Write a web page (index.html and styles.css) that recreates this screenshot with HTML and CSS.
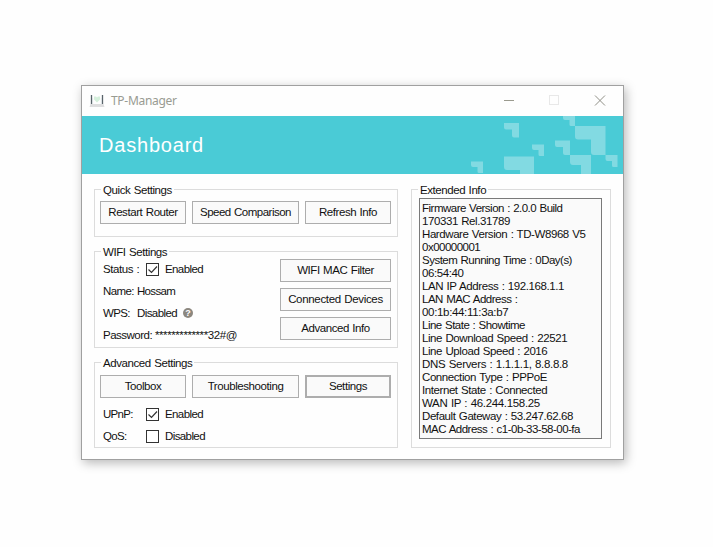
FILE: index.html
```
<!DOCTYPE html>
<html lang="en">
<head>
<meta charset="utf-8">
<title>TP-Manager</title>
<link rel="stylesheet" href="styles.css">
</head>
<body>
<div class="window">
  <header class="titlebar">
    <svg class="app-icon" width="16" height="14" viewBox="0 0 16 14">
      <path d="M5 2.500h2l1 1 1-1h2v3L8 8.500 5 5.500z" fill="#d5f0dc"/>
      <path d="M2.500 1v9M13.500 1v9" stroke="#59636a" stroke-width="1.300"/>
      <path d="M3.600 4v6M12.400 4v6" stroke="#d9dfe2"/>
      <path d="M1.500 10h13l1 3H.5z" fill="#dededf"/>
    </svg>
    <span class="app-name">TP-Manager</span>
    <svg class="controls" width="104" height="12" viewBox="0 0 104 12" fill="none">
      <path d="M0 5.500h10" stroke="#9a9a8e"/>
      <rect x="45.500" y=".5" width="9" height="9" stroke="#e8e8e8"/>
      <path d="M91 .5l10 10M101 .5l-10 10" stroke="#8f8f86"/>
    </svg>
  </header>
  <div class="banner">
    <h1>Dashboard</h1>
    <svg class="pattern" width="160" height="58" viewBox="0 0 160 58" fill="#82dae2">
      <path d="M42 7h15v14.500h-5q-2 0-2-2V13.500h-6q-2 0-2-2z"/>
      <path d="M70 28.500h12v11.500h-4q-1.500 0-1.500-1.500V34H72q-2 0-2-2z"/>
      <path d="M9 45.500h12V57h-4q-1.500 0-1.500-1.500V51H11q-2 0-2-2z"/>
      <path d="M42 40.500h30V58H58v-4H45q-3 0-3-3z"/>
      <path d="M101 0h12v10h-4q-1.500 0-1.500-1.500V4H103q-2 0-2-2z"/>
      <path d="M113 10h30.500v29H132q-3 0-3-3V23.500h-13q-3 0-3-3z"/>
      <path d="M93 24.500h15V39h-5q-2 0-2-2v-6h-6q-2 0-2-2z"/>
      <path d="M108 39h21v19h-10v-9h-8q-3 0-3-3z"/>
      <path d="M143.500 39H155.500v12h-4q-1.500 0-1.500-1.500V45h-4.500q-2 0-2-2z"/>
    </svg>
  </div>
  <main class="content">
    <div class="settings">
      <section class="group quick">
        <h2>Quick Settings</h2>
        <div class="button-row">
          <button>Restart Router</button>
          <button class="snug">Speed Comparison</button>
          <button>Refresh Info</button>
        </div>
      </section>
      <section class="group wifi">
        <h2>WIFI Settings</h2>
        <div class="wifi-body">
          <div class="rows">
            <div class="row"><span class="status-label">Status :</span><svg class="check" width="13" height="13" viewBox="0 0 13 13"><rect x=".5" y=".5" width="12" height="12"/><path d="M2.500 6.500l3 3 5.500-6"/></svg><span class="state">Enabled</span></div>
            <div class="row"><span class="name-label">Name:</span><span class="tight">Hossam</span></div>
            <div class="row"><span class="wps-label">WPS:</span><span class="wps-state">Disabled</span><span class="help">?</span></div>
            <div class="row"><span class="pass-label">Password:</span><span>*************32#@</span></div>
          </div>
          <div class="button-stack">
            <button>WIFI MAC Filter</button>
            <button class="loose">Connected Devices</button>
            <button>Advanced Info</button>
          </div>
        </div>
      </section>
      <section class="group advanced">
        <h2>Advanced Settings</h2>
        <div class="button-row">
          <button>Toolbox</button>
          <button>Troubleshooting</button>
          <button class="focused">Settings</button>
        </div>
        <div class="rows">
          <div class="row"><span class="status-label tight">UPnP:</span><svg class="check" width="13" height="13" viewBox="0 0 13 13"><rect x=".5" y=".5" width="12" height="12"/><path d="M2.500 6.500l3 3 5.500-6"/></svg><span class="state">Enabled</span></div>
          <div class="row"><span class="status-label tight">QoS:</span><svg class="check" width="13" height="13" viewBox="0 0 13 13"><rect x=".5" y=".5" width="12" height="12"/></svg><span class="state">Disabled</span></div>
        </div>
      </section>
    </div>
    <section class="group extended">
      <h2>Extended Info</h2>
      <div class="info">
        <div class="snug">Firmware Version : 2.0.0 Build</div>
        <div>170331 Rel.31789</div>
        <div>Hardware Version : TD-W8968 V5</div>
        <div class="snug">0x00000001</div>
        <div class="snug">System Running Time : 0Day(s)</div>
        <div>06:54:40</div>
        <div>LAN IP Address : 192.168.1.1</div>
        <div class="snug">LAN MAC Address :</div>
        <div class="loose">00:1b:44:11:3a:b7</div>
        <div class="snug">Line State : Showtime</div>
        <div>Line Download Speed : 22521</div>
        <div>Line Upload Speed : 2016</div>
        <div class="loose">DNS Servers : 1.1.1.1, 8.8.8.8</div>
        <div>Connection Type : PPPoE</div>
        <div>Internet State : Connected</div>
        <div class="loose">WAN IP : 46.244.158.25</div>
        <div>Default Gateway : 53.247.62.68</div>
        <div class="snug">MAC Address : c1-0b-33-58-00-fa</div>
      </div>
    </section>
  </main>
</div>
</body>
</html>
```
FILE: styles.css
```
* { box-sizing: border-box; }
body {
  margin: 0;
  padding: 85px 0 0 81px;
  height: 547px;
  background: #fefefe;
  color: #111;
  font: 11.5px/13px "Liberation Sans", Arial, sans-serif;
  letter-spacing: -0.42px;
  word-spacing: .6px;
  white-space: nowrap;
}
h1, h2 { margin: 0; font-weight: normal; }
.window {
  width: 543px;
  height: 375px;
  border: 1px solid #a0a0a0;
  background: #fefefe;
  box-shadow: 2px 3px 10px rgba(0, 0, 0, .28);
}
.titlebar {
  display: flex;
  align-items: center;
  height: 30px;
  padding: 0 19px 0 7px;
}
.app-icon { margin-top: -1px; }
.app-name {
  margin-left: 6px;
  flex: 1;
  color: #999b92;
  font: 12px/16px "Noto Sans", sans-serif;
  letter-spacing: -0.3px;
}
.controls { margin-right: -4px; }
.banner {
  display: flex;
  justify-content: space-between;
  height: 58px;
  padding: 0 0 0 17px;
  background: #4acbd6;
}
.banner h1 {
  color: #fff;
  font: 20px/58px "Liberation Sans", Arial, sans-serif;
  letter-spacing: .8px;
}
.pattern { margin-right: 1px; }
.content {
  display: flex;
  gap: 13px;
  padding: 15px 12px 0;
}
.settings {
  display: flex;
  flex-direction: column;
  gap: 14px;
  width: 304px;
}
.group { border: 1px solid #dcdcdc; }
.group h2 {
  width: fit-content;
  height: 12px;
  margin: -6px 0 0 6px;
  padding: 0 2px;
  background: #fefefe;
  font-size: 11.5px;
  line-height: 13px;
}
.quick { height: 48px; }
.wifi { height: 97px; }
.advanced { height: 86px; }
.extended { width: 200px; height: 259px; }
button {
  height: 23px;
  padding: 0;
  border: 1px solid #adadad;
  background: #fafafa;
  color: #111;
  font: inherit;
  letter-spacing: inherit;
  word-spacing: inherit;
}
.focused { border-width: 2px; }
.button-row {
  display: grid;
  grid-template-columns: 86px 107px 86px;
  gap: 6px;
  padding: 5px 0 0 5px;
}
.advanced .button-row { padding-top: 6px; }
.wifi-body {
  display: flex;
  justify-content: space-between;
  align-items: flex-start;
  padding-right: 6px;
}
.button-stack {
  display: grid;
  width: 111px;
  gap: 6px;
  padding-top: 1px;
}
.rows { padding-left: 8px; }
.row { display: flex; align-items: center; height: 22px; }
.advanced .rows { padding-top: 5px; }
.status-label { width: 43px; }
.name-label { width: 34px; letter-spacing: -0.6px; }
.wps-label { width: 34px; letter-spacing: -0.65px; }
.wps-state { letter-spacing: -0.58px; }
.pass-label { width: 52px; letter-spacing: -0.5px; }
.state { margin-left: 6px; letter-spacing: -0.6px; }
.check { fill: #fff; stroke: #333; }
.check path { fill: none; stroke-width: 1.200; }
.help {
  width: 10px;
  height: 10px;
  margin-left: 6px;
  border-radius: 50%;
  background: #8c877f;
  color: #fff;
  font: bold 9px/10px "Liberation Sans", sans-serif;
  letter-spacing: 0;
  text-align: center;
}
.info {
  width: 183px;
  height: 241px;
  margin: 2px 0 0 7px;
  padding: 3px 2px;
  border: 1px solid #7a7a7a;
  background: #fafafa;
}
.snug { letter-spacing: -0.51px; }
.tight { letter-spacing: -0.68px; }
.loose { letter-spacing: -0.33px; }
```
